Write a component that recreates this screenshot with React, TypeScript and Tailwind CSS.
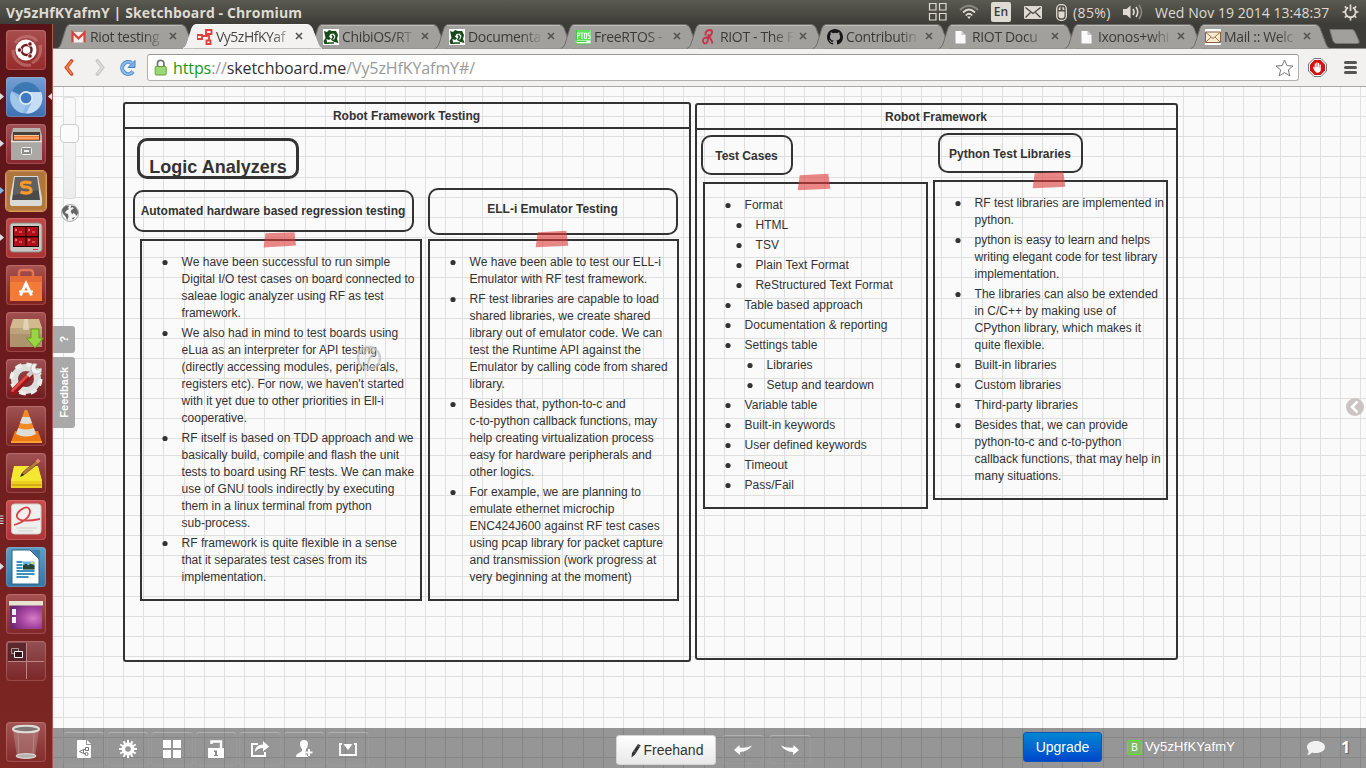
import React from "react";

const GRID = [0, 20, 40, 60, 80, 100, 121, 141, 161, 181, 201, 221, 242, 262, 282, 302, 322, 342, 362, 382];

function Grid() {
  return (
    <svg className="absolute inset-0 h-full w-full" shapeRendering="crispEdges">
      <defs>
        <pattern id="grid" x="10" y="-31" width="399" height="399" patternUnits="userSpaceOnUse">
          {GRID.map((v) => (
            <g key={v} fill="#dfdfdf">
              <rect x={v} y="0" width="1" height="399" />
              <rect x="0" y={v} width="399" height="1" />
            </g>
          ))}
        </pattern>
      </defs>
      <rect width="100%" height="100%" fill="url(#grid)" />
    </svg>
  );
}

/* ---------- system bar ---------- */

function SystemBar() {
  return (
    <header className="flex h-6 shrink-0 items-center justify-between bg-linear-to-b from-[#5b5a50] to-[#3e3d38] pr-[7px] pl-[6px] font-['Open_Sans',sans-serif] text-[14px] text-[#dfdbd2]">
      <div className="text-[14px] font-bold tracking-[0.120px] whitespace-nowrap">Vy5zHfKYafmY | Sketchboard - Chromium</div>
      <div className="flex h-full items-center">
        <svg width="20" height="20" viewBox="0 0 20 20" fill="none" stroke="#dfdbd2" strokeWidth="1.2">
          <path d="M1.500 1.500h6.500v6.500h-6.500zM11.500 1.500h6.500v6.500h-6.500zM1.500 11.500h6.500v6.500h-6.500zM11.500 11.500h6.500v6.500h-6.500z" />
        </svg>
        <svg className="ml-[11px]" width="20" height="16" viewBox="0 0 20 16" fill="none" stroke="#dfdbd2" strokeWidth="1.8">
          <path d="M1 6Q10-2.500 19 6" stroke="#8b8880" />
          <path d="M4 8.500Q10 2.500 16 8.500M6.800 11.500Q10 8 13.200 11.500" />
          <path d="M10 15l-2-2.500h4z" fill="#dfdbd2" stroke="none" />
        </svg>
        <div className="ml-[12px] flex h-5 w-5 items-center justify-center rounded-[2px] bg-[#dfdbd2] text-[12px] font-semibold text-[#3c3b37]">En</div>
        <svg className="ml-[13px]" width="18" height="13" viewBox="0 0 18 13">
          <rect width="18" height="13" rx="1" fill="#dfdbd2" />
          <path d="M1.500 1.500l7.500 6 7.500-6M1.500 11.500l5-5M16.500 11.500l-5-5" fill="none" stroke="#45443e" strokeWidth="1.200" />
        </svg>
        <svg className="ml-[14px]" width="11" height="17" viewBox="0 0 11 17">
          <rect x=".7" y=".7" width="9.600" height="15.600" rx="4" fill="none" stroke="#dfdbd2" strokeWidth="1.300" />
          <path d="M2.500 7.500h6v5q-.5 2-3 2t-3-2zM2.500 6q0-3 2-3.500V6zM8.500 6q0-3-2-3.500V6z" fill="#dfdbd2" />
        </svg>
        <span className="ml-[6px] w-[38px] text-[14px] tracking-[0.400px]">(85%)</span>
        <svg className="ml-3" width="20" height="16" viewBox="0 0 20 16" fill="none" stroke="#dfdbd2" strokeWidth="1.600">
          <path d="M0 5h3.500l4-3.500v13L3.500 11H0z" fill="#dfdbd2" stroke="none" />
          <path d="M10 5q2 3 0 6M13 3q3.500 5 0 10" />
          <path d="M16 1q5 7 0 14" stroke="#8b8880" />
        </svg>
        <span className="ml-3 w-[175px] text-[14px] tracking-[0.040px] whitespace-nowrap">Wed Nov 19 2014 13:48:37</span>
        <svg className="ml-3" width="17" height="18" viewBox="0 0 18 18" fill="none" stroke="#dfdbd2" strokeWidth="2">
          <path d="M6.500 4.200a5.500 5.500 0 1 0 5 0" />
          <path d="M9 1v7" strokeWidth="1.800" />
          <path d="M.5 9H4M14 9h3.500M3 3l2.300 2.300M15 3l-2.300 2.300M3 15l2.300-2.300M15 15l-2.300-2.300M9 14.500V18" strokeWidth="1.800" />
        </svg>
      </div>
    </header>
  );
}

/* ---------- tab strip ---------- */

const chibi = (
  <svg width="16" height="16" viewBox="0 0 16 16">
    <rect width="16" height="16" fill="#fff" />
    <path d="M1 2l3 1 2-2 3 1 4 0 2 4-1 4 1.500 4-4-1-3-1.500 3-1.500 1-3-2-2.500-3 .5-1.500 2.500 2 2-2 1.500-2.500-1 .5 3 2 2H1.500l-1-3 2-3z" fill="#174b18" />
    <path d="M9 6l1.500 2-2 3M4 6l2 1M5 14h6" fill="none" stroke="#174b18" strokeWidth="1.500" />
  </svg>
);
const page = (
  <svg width="16" height="16" viewBox="0 0 16 16">
    <path d="M2.500 2H8.500l4 4v8.500h-10z" fill="#fafafa" />
    <path d="M8.500 2v4h4z" fill="#c8c8c8" />
  </svg>
);

const TABS: { title: string; icon: React.ReactNode; active?: boolean }[] = [
  {
    title: "Riot testing",
    icon: (
      <svg width="16" height="16" viewBox="0 0 16 16">
        <path d="M1 3h13v10.500H1z" fill="#f1eeee" />
        <path d="M1.500 13.500V3.500l6 6 6-6v10" fill="none" stroke="#d6423b" strokeWidth="2.200" />
      </svg>
    ),
  },
  {
    title: "Vy5zHfKYaf",
    active: true,
    icon: (
      <svg width="18" height="16" viewBox="0 0 18 16" fill="none" stroke="#de3f3c" strokeWidth="1.800">
        <path d="M0 6h5v4H0zM9 1h5.500v4H9zM9.500 11.500h4v3.500h-4zM5 7h5V5M12 5v6" />
      </svg>
    ),
  },
  { title: "ChibiOS/RT", icon: chibi },
  { title: "Documenta", icon: chibi },
  {
    title: "FreeRTOS -",
    icon: (
      <svg width="16" height="16" viewBox="0 0 16 16">
        <path fill="#fff" d="M.5 1h15v14H.5z" />
        <path d="M.5 1h15v10.500H.5z" fill="#5be35e" />
        <path d="M2.500 4v6M2.500 4h2v2.500H3M5.500 4h3M7 4v6M9.500 4h2v5.500h-2zM15 4h-2v2.500h2v3h-2" fill="none" stroke="#eaffea" />
        <path d="M1.500 12.500h10M.5 14.800h15" stroke="#42cf45" />
        <path d="M1 1v14" stroke="#2c9c30" strokeWidth=".8" />
      </svg>
    ),
  },
  {
    title: "RIOT - The F",
    icon: (
      <svg width="16" height="16" viewBox="0 0 16 16" fill="none" stroke="#cb2f49" strokeWidth="1.800">
        <path d="M4.500 6.500q-.5-5 4-5.500 4 0 2 4-1 2-3.500 3 3 0 4.500 6.500M6.500 8.500q-5 0-4.500 3.500t3.500 2q2-2 2-9" />
      </svg>
    ),
  },
  {
    title: "Contributin",
    icon: (
      <svg width="16" height="16" viewBox="0 0 16 16">
        <path
          fill="#161616"
          d="M8 0C3.580 0 0 3.580 0 8c0 3.540 2.290 6.530 5.470 7.590.4.070.55-.17.55-.38v-1.490c-2.010.37-2.530-.49-2.690-.94-.09-.23-.48-.94-.82-1.130-.28-.15-.68-.52-.01-.53.63-.01 1.080.58 1.230.82.72 1.210 1.870.87 2.330.66.07-.52.28-.87.51-1.070-1.780-.2-3.640-.89-3.640-3.950 0-.87.31-1.590.82-2.150-.08-.2-.36-1.020.08-2.120 0 0 .67-.21 2.200.82a7.600 7.600 0 0 1 4 0c1.530-1.040 2.200-.82 2.200-.82.44 1.100.16 1.920.08 2.120.51.56.82 1.270.82 2.150 0 3.070-1.870 3.750-3.650 3.950.29.25.54.73.54 1.480v2.200c0 .21.15.46.55.38A8 8 0 0 0 16 8c0-4.420-3.580-8-8-8z"
        />
      </svg>
    ),
  },
  { title: "RIOT Docu", icon: page },
  { title: "Ixonos+whi", icon: page },
  {
    title: "Mail :: Welc",
    icon: (
      <svg width="16" height="16" viewBox="0 0 16 16">
        <path fill="#fff" d="M0 0h16v16H0z" />
        <path d="M.5 3h15v10.500H.5z" fill="#f7ead2" stroke="#876040" />
        <path d="M1 3.500l7 6 7-6M1 13l5-5M15 13l-5-5" fill="none" stroke="#a57249" />
      </svg>
    ),
  },
];

function Tab({ title, icon, active }: { title: string; icon: React.ReactNode; active?: boolean }) {
  return (
    <div className={active ? "relative z-10 flex h-[25px] w-[126px] items-center" : "relative flex h-[25px] w-[126px] items-center"}>
      <svg className="absolute top-0 left-0" width="140" height="25" viewBox="0 0 140 25">
        <path
          d="M0 24.500Q2.500 24 4 20L9 4Q10.300 .5 13 .5H124Q127.500 .5 129 4L135 20Q136.500 24 139 24.500"
          fill={active ? "#f3f2f1" : "#a2a09d"}
          stroke={active ? "#f8f8f8" : "#6f6e6a"}
        />
        {!active && <path d="M12 1.500H125" stroke="#bdbbb8" />}
      </svg>
      <div className="relative ml-[14px] flex h-4 w-[19px] shrink-0 items-center">{icon}</div>
      <span
        className={
          active
            ? "relative w-[75px] shrink-0 bg-linear-to-r from-[#45433f] from-75% to-[#d0cfcd] bg-clip-text font-['Open_Sans',sans-serif] text-[14px] leading-[22px] tracking-[-0.500px] whitespace-nowrap text-transparent"
            : "relative w-[76px] shrink-0 bg-linear-to-r from-[#3b3833] from-70% to-[#a2a09d] to-98% bg-clip-text font-['Open_Sans',sans-serif] text-[14px] leading-[22px] tracking-[-0.350px] whitespace-nowrap text-transparent"
        }
      >
        {title}
      </span>
      <svg className="absolute top-[8px] left-[112px]" width="8" height="8" viewBox="0 0 8 8">
        <path d="M1 1l6 6M7 1l-6 6" stroke="#55534f" strokeWidth="1.600" />
      </svg>
    </div>
  );
}

function TabStrip() {
  return (
    <div className="flex h-[25px] items-start border-b border-[#8b8a87] bg-[#3d3c38] pl-[4px]">
      {TABS.map((t, i) => (
        <Tab key={i} {...t} />
      ))}
      <svg className="mt-[5px] ml-[11px]" width="33" height="16" viewBox="0 0 33 16">
        <path d="M2 1.500Q1 .5 3 .5H24Q26 .5 27 3L31 12Q32 14.500 29 14.500H9Q6 14.500 5 12z" fill="#a2a09d" stroke="#77756f" />
      </svg>
    </div>
  );
}

function AddressBar() {
  return (
    <div className="flex h-[38px] items-center border-b border-[#a9a8a6] bg-[#f2f1f0] pr-[9px] pl-[11px]">
      <svg width="10" height="17" viewBox="0 0 10 17">
        <path d="M7.500 2L2.500 8.500 7.500 15" fill="none" stroke="#c9481c" strokeWidth="3.600" strokeLinecap="round" />
        <path d="M7.300 2.500L2.700 8.500l4.600 6" fill="none" stroke="#f08048" strokeWidth="1.800" strokeLinecap="round" />
      </svg>
      <svg className="ml-[21px]" width="10" height="17" viewBox="0 0 10 17">
        <path d="M2.500 2L7.500 8.500 2.500 15" fill="none" stroke="#c6c4c1" strokeWidth="3.600" strokeLinecap="round" />
        <path d="M2.700 2.500l4.600 6-4.600 6" fill="none" stroke="#dddbd9" strokeWidth="1.800" strokeLinecap="round" />
      </svg>
      <svg className="ml-[14px]" width="18" height="18" viewBox="0 0 18 18" fill="none">
        <path d="M12.500 4A6 6 0 1 0 14 12.500" stroke="#4384c4" strokeWidth="4" />
        <path d="M12.500 4A6 6 0 1 0 14 12.500" stroke="#8ab8e6" strokeWidth="2.400" />
        <path d="M16 1.500v7H9z" fill="#7db0e2" stroke="#4384c4" />
      </svg>
      <div className="ml-[10px] flex h-[27px] w-[1152px] items-center rounded-[3px] border border-[#b3b1ae] border-t-[#989693] bg-white pr-[4px] pl-[6px]">
        <svg width="14" height="17" viewBox="0 0 14 17">
          <path d="M3.500 8V4.500a3.200 3.200 0 0 1 6.400 0V8" fill="none" stroke="#777" strokeWidth="1.800" />
          <rect x="1.200" y="7.500" width="11" height="8.500" rx="1" fill="#9ad973" stroke="#5fa03a" />
        </svg>
        <div className="ml-[5px] flex-1 font-['Open_Sans',sans-serif] text-[16px] tracking-[-0.100px] whitespace-nowrap text-[#999]">
          <span className="text-[#159a15]">https</span>://<span className="text-[#2f2f2f]">sketchboard.me</span>/Vy5zHfKYafmY#/
        </div>
        <svg width="19" height="18" viewBox="0 0 19 18">
          <path d="M9.500 1l2.400 5.600 6.100.4-4.700 3.900 1.600 6-5.400-3.300-5.400 3.300 1.600-6L1 7l6.100-.4z" fill="#fff" stroke="#777" strokeLinejoin="round" />
        </svg>
      </div>
      <svg className="ml-[9px]" width="19" height="19" viewBox="0 0 19 19">
        <path d="M6 .5h7l5.500 5.500v7L13 18.500H6L.5 13V6z" fill="#fff" stroke="#777" />
        <path d="M6.500 2h6L17 6.500v6L12.500 17h-6L2 12.500v-6z" fill="#d7110f" />
        <path d="M5 9q1.200-.8 1.700 1V5.500h1.200V9h.4V4.500h1.300V9H10V5h1.200v4.500h.4V6.500h1.200v5.500q-.5 2.800-3.300 2.800T5 9" fill="#fff" />
      </svg>
      <div className="ml-[17px] flex w-[13px] flex-col gap-[2px]">
        <div className="h-[3px] rounded-sm bg-[#555]" />
        <div className="h-[3px] rounded-sm bg-[#555]" />
        <div className="h-[3px] rounded-sm bg-[#555]" />
      </div>
    </div>
  );
}

/* ---------- launcher ---------- */

type LaunchItem = { bg: string; art: React.ReactNode; mark?: string };

const ITEMS: LaunchItem[] = [
  {
    bg: "bg-linear-to-b from-[#a84e4e] to-[#962a2a]",
    art: (
      <>
        <path d="M9 13a14 14 0 0 1 22-2M34 15a15 15 0 0 1-8 18M25 35A15 15 0 0 1 7 20" fill="none" stroke="#c98080" strokeWidth="3" opacity=".6" />
        <circle cx="20" cy="20" r="10.500" fill="#fff" />
        <circle cx="20.500" cy="20" r="5" fill="none" stroke="#76191c" strokeWidth="2.400" />
        <g fill="#76191c" stroke="#fff" strokeWidth=".8">
          <circle cx="13.500" cy="20" r="2.200" />
          <circle cx="24" cy="14" r="2.200" />
          <circle cx="24" cy="26" r="2.200" />
        </g>
      </>
    ),
  },
  {
    mark: "#ddd",
    bg: "bg-linear-to-b from-[#73a0d4] to-[#3d70b0]",
    art: (
      <>
        <circle cx="20" cy="21" r="15.500" fill="#8db8e4" />
        <path d="M20 21L6 14A15.500 15.500 0 0 1 34.500 15z" fill="#3d78b4" />
        <path d="M20 15h15.200a15.500 15.500 0 0 1-15 21.500l6-12z" fill="#c4def4" />
        <path d="M5.500 14.500l9 9.500 6 3-4 9A15.500 15.500 0 0 1 5.500 14.500" fill="#a0c6ec" />
        <circle cx="20" cy="21" r="7" fill="#dcecf8" />
        <circle cx="20" cy="21" r="5.300" fill="#4179c7" />
      </>
    ),
  },
  {
    mark: "#ddd",
    bg: "bg-linear-to-b from-[#a05055] to-[#87272f]",
    art: (
      <>
        <path d="M7 4h27l2 8v6H5v-6z" fill="#b5b3b0" />
        <path d="M7 8h27v10H7z" fill="#493e39" />
        <path d="M8 11h25v5H8z" fill="#ed7731" />
        <path d="M8 11.500h25M8 14h25" stroke="#f8c79a" />
        <path d="M5 17h31v19H5z" fill="#aaa9a5" />
        <path d="M5 17.500h31" stroke="#e6e6e2" strokeWidth="1.500" />
        <rect x="15.500" y="23.500" width="10" height="7" rx="1" fill="#8b8b88" stroke="#eee" />
        <path d="M18 26h5v2h-5z" fill="#eee" />
      </>
    ),
  },
  {
    mark: "#7db8df",
    bg: "bg-linear-to-b from-[#ad743c] to-[#b47839] ring-1 ring-[#dc9c4b]",
    art: (
      <>
        <path d="M8 5h24l4 22v6q0 2-2 2H6q-2 0-2-2v-6z" fill="#d9d9d8" />
        <path d="M9 6h22l3 23H6z" fill="#4a4a4b" />
        <path d="M9 6h22l2 13-26 5z" fill="#6f6f6f" opacity=".6" />
        <path d="M25.500 12q-8-2-10 .5-1 3.500 4.500 3.500t5 4.500q-3 3-10.500.5" fill="none" stroke="#f5982a" strokeWidth="3.200" />
      </>
    ),
  },
  {
    mark: "#ddd",
    bg: "bg-linear-to-b from-[#bf4848] to-[#aa3334]",
    art: (
      <>
        <rect x="4" y="5" width="32" height="29" rx="3" fill="#c9c6c1" stroke="#8e8882" />
        <path d="M7 8h26v21H7z" fill="#230204" />
        <path d="M8 9h11v9H8zM20.500 9H32v9H20.500zM8 19.500h11V28H8zM20.500 19.500H32V28H20.500z" fill="#b20f18" />
        <path d="M9 11l2 1-2 1M13 14h3M22 11l2 1-2 1M26 14h3M9 21l2 1-2 1M13 24h3M22 21l2 1-2 1M26 24h3" fill="none" stroke="#f5a8a8" strokeWidth=".8" />
        <path d="M27 31.500h5" stroke="#d34" strokeWidth="1" />
      </>
    ),
  },
  {
    bg: "bg-linear-to-b from-[#a75350] to-[#7f2020]",
    art: (
      <>
        <path d="M13 12V8q0-3 3-3h8q3 0 3 3v4" fill="none" stroke="#df7455" strokeWidth="2.500" />
        <path d="M4 11h32v25H4z" fill="#f37b3a" />
        <path d="M4 11h32v6H4z" fill="#e46a36" />
        <path d="M14.500 30.500l5.500-12 5.500 12" fill="none" stroke="#fff" strokeWidth="3" />
        <path d="M13 26.500h14" stroke="#fff" strokeWidth="2" />
      </>
    ),
  },
  {
    bg: "bg-linear-to-b from-[#a15050] to-[#7d2022]",
    art: (
      <>
        <path d="M7 7h26l3 9H4z" fill="#d2b98e" />
        <path d="M4 16h32v19H4z" fill="#ad946f" />
        <path d="M4 16h32v6H4z" fill="#bca37b" />
        <path d="M18 7h4l1 11h-6z" fill="#e9dec7" opacity=".7" />
        <path d="M25 17h8v9h4.500L29 36l-8.500-10H25z" fill="#9bd444" stroke="#639b1b" />
      </>
    ),
  },
  {
    bg: "bg-linear-to-b from-[#a05054] to-[#6f1a1e]",
    art: (
      <>
        <circle cx="20" cy="20" r="11.500" fill="none" stroke="#dededc" strokeWidth="7" />
        <circle cx="20" cy="20" r="14.500" fill="none" stroke="#ededeb" strokeWidth="4" strokeDasharray="6.500 4.890" />
        <path d="M7 33L24 16" stroke="#9a1519" strokeWidth="6.500" strokeLinecap="round" />
        <path d="M6.500 31.500L23 15" stroke="#df4a49" strokeWidth="3" strokeLinecap="round" />
        <path d="M22 17L28 11" stroke="#ccc" strokeWidth="4.500" />
        <path d="M31 5q-6-2-6 5 1 6 7 5 5-2 3-6l-4 2-2-2z" fill="#f1f1ef" stroke="#aaa" strokeWidth=".7" />
      </>
    ),
  },
  {
    bg: "bg-linear-to-b from-[#a15353] to-[#762022]",
    art: (
      <>
        <path d="M9 25h23l4 11H5z" fill="#ee7914" />
        <path d="M18.500 4.500q1.500-1.500 3 0L30 28q-10 6-20 0z" fill="#f28b24" />
        <path d="M16.200 11h7.600l2.200 6q-6 2-12 0zM12.200 22q8 3 15.600 0l2.200 6q-10 5-20 0z" fill="#dddeda" />
        <path d="M5 35h31v2H5z" fill="#f9a132" />
      </>
    ),
  },
  {
    bg: "bg-linear-to-b from-[#a05354] to-[#7a2223]",
    art: (
      <>
        <path d="M8 14h24l4 14v7H5v-7z" fill="#edcf1d" />
        <path d="M8 13h24l4 15H5z" fill="#f4e731" />
        <path d="M6 32h29" stroke="#b58d12" />
        <path d="M15 23l2-4L31 7l2.500 2.500L19 21z" fill="#b77a43" stroke="#634122" strokeWidth=".7" />
        <path d="M29.500 8L32 5.500l2.500 2.500-2.500 2.500z" fill="#f08077" />
        <path d="M14 24l2-4 2 2z" fill="#2b2520" />
      </>
    ),
  },
  {
    mark: "bars",
    bg: "bg-linear-to-b from-[#c94e4e] to-[#ae3436]",
    art: (
      <>
        <rect x="5.500" y="4" width="29.500" height="30" rx="3" fill="#efefed" stroke="#ccc" />
        <path d="M8 25q16-5 16-14-1-5-6-3-8 4-7 9 2 6 23 2" fill="none" stroke="#db4144" strokeWidth="1.800" />
        <path d="M10 28h21M12 31h15" stroke="#cfcfcd" strokeWidth="1.200" />
      </>
    ),
  },
  {
    mark: "#ddd",
    bg: "bg-linear-to-b from-[#5d9fc4] to-[#2f77a5]",
    art: (
      <>
        <path d="M6 3h18l9 9v25H6z" fill="#fff" stroke="#28658b" />
        <path d="M25 3h9v9z" fill="#3c82aa" />
        <path d="M10.500 15h6M10.500 18h6M10.500 21h6M10.500 24h18M10.500 27h18M10.500 30h12" stroke="#3d92bf" strokeWidth="1.800" />
        <path d="M17 14.500h11.500v8H17z" fill="#66b8dd" />
        <path d="M17 22.500v-4l3-2 2 2 3-2 3.500 2v4z" fill="#274536" />
        <circle cx="26" cy="16" r="1.300" fill="#f0d85c" />
      </>
    ),
  },
  {
    bg: "bg-linear-to-b from-[#a75353] to-[#802628]",
    art: (
      <>
        <defs>
          <radialGradient id="desk" cx=".72" cy=".55" r=".75">
            <stop offset="0" stopColor="#d57cc6" />
            <stop offset=".5" stopColor="#a645a0" />
            <stop offset="1" stopColor="#6d2674" />
          </radialGradient>
        </defs>
        <path d="M4 11h32v24H4z" fill="url(#desk)" />
        <path d="M3 7h34v4.500H3z" fill="#e7e3ce" />
        <path d="M6 15h4v6H6zM6 23h4v6H6z" fill="#f3eff5" />
      </>
    ),
  },
  {
    bg: "bg-linear-to-b from-[#935054] to-[#7b2627]",
    art: (
      <>
        <path d="M2 2h18v18H2z" fill="#45191f" opacity=".7" />
        <path d="M2 20.500h36M20.500 2v36" stroke="#be8586" />
        <path d="M5.500 7.500h7v5h-7z" fill="none" stroke="#a79798" />
        <path d="M8.500 10.500h8v6h-8z" fill="#35161a" stroke="#fff" />
      </>
    ),
  },
];

function LauncherTile({ bg, art, mark }: LaunchItem) {
  return (
    <div className="relative flex h-10 w-[53px] shrink-0 pl-[6px]">
      {mark && mark !== "bars" && (
        <svg className="absolute top-[15px] left-0" width="4" height="9" viewBox="0 0 4 9">
          <path d="M0 1l4 3.500-4 3.500z" fill={mark} />
        </svg>
      )}
      {mark === "bars" && (
        <svg className="absolute top-[15px] left-0" width="4" height="10" viewBox="0 0 4 10">
          <path d="M0 1h3.500M0 3.500h3.500M0 6h3.500M0 8.500h3.500" stroke="#ddd" />
        </svg>
      )}
      <div className={"h-10 w-10 overflow-hidden rounded-[4px] shadow-[inset_0_0_1px_1px_rgba(255,190,190,0.25)] " + bg}>
        <svg width="40" height="40" viewBox="0 0 40 40">
          {art}
        </svg>
      </div>
    </div>
  );
}

function Launcher() {
  return (
    <aside className="relative flex w-[53px] shrink-0 flex-col border-r border-[#b05550] bg-linear-to-b from-[#591318] via-[#6e1c1e] to-[#7e2723] pt-[6px]">
      <div className="flex flex-col gap-[7px]">
        {ITEMS.map((it, i) => (
          <LauncherTile key={i} {...it} />
        ))}
      </div>
      <svg className="absolute top-[68px] left-[48px]" width="4" height="9" viewBox="0 0 4 9">
        <path d="M4 1L0 4.500 4 8z" fill="#ddd" />
      </svg>
      <div className="mt-[41px]">
        <LauncherTile
          bg="bg-linear-to-b from-[#a35454] to-[#832b2b]"
          art={
            <>
              <path d="M7 8h26l-4 27q-9 4-18 0z" fill="#c9b1ae" opacity=".35" />
              <path d="M12 10l1 24M28 10l-1 24" stroke="#c5aaa8" opacity=".5" />
              <ellipse cx="20" cy="7" rx="13" ry="3.300" fill="#807672" stroke="#deddda" strokeWidth="2" />
              <ellipse cx="20" cy="34" rx="10" ry="2.300" fill="#b5b2ae" stroke="#e5e3df" />
            </>
          }
        />
      </div>
    </aside>
  );
}

/* ---------- board ---------- */

type Entry = { lines: string[]; level?: number };
const e = (level: number, ...lines: string[]): Entry => ({ lines, level });

const HARDWARE = [
  e(0, "We have been successful to run simple", "Digital I/O test cases on board connected to", "saleae logic analyzer using RF as test", "framework."),
  e(0, "We also had in mind to test boards using", "eLua as an interpreter for API testing", "(directly accessing modules, peripherals,", "registers etc). For now, we haven't started", "with it yet due to other priorities in Ell-i", "cooperative."),
  e(0, "RF itself is based on TDD approach and we", "basically build, compile and flash the unit", "tests to board using RF tests. We can make", "use of GNU tools indirectly by executing", "them in a linux terminal from python", "sub-process."),
  e(0, "RF framework is quite flexible in a sense", "that it separates test cases from its", "implementation."),
];
const EMULATOR = [
  e(0, "We have been able to test our ELL-i", "Emulator with RF test framework."),
  e(0, "RF test libraries are capable to load", "shared libraries, we create shared", "library out of emulator code. We can", "test the Runtime API against the", "Emulator by calling code from shared", "library."),
  e(0, "Besides that, python-to-c and", "c-to-python callback functions, may", "help creating virtualization process", "easy for hardware peripherals and", "other logics."),
  e(0, "For example, we are planning to", "emulate ethernet microchip", "ENC424J600 against RF test cases", "using pcap library for packet capture", "and transmission (work progress at", "very beginning at the moment)"),
];
const CASES = [
  e(0, "Format"), e(1, "HTML"), e(1, "TSV"), e(1, "Plain Text Format"), e(1, "ReStructured Text Format"),
  e(0, "Table based approach"), e(0, "Documentation & reporting"), e(0, "Settings table"), e(2, "Libraries"), e(2, "Setup and teardown"),
  e(0, "Variable table"), e(0, "Built-in keywords"), e(0, "User defined keywords"), e(0, "Timeout"), e(0, "Pass/Fail"),
];
const LIBS = [
  e(0, "RF test libraries are implemented in", "python."),
  e(0, "python is easy to learn and helps", "writing elegant code for test library", "implementation."),
  e(0, "The libraries can also be extended", "in C/C++ by making use of", "CPython library, which makes it", "quite flexible."),
  e(0, "Built-in libraries"), e(0, "Custom libraries"), e(0, "Third-party libraries"),
  e(0, "Besides that, we can provide", "python-to-c and c-to-python", "callback functions, that may help in", "many situations."),
];
const INDENT = ["pl-[19.600px]", "pl-[30.600px]", "pl-[41.600px]"];

function Note({ place, entries, tape, flat }: { place: string; entries: Entry[]; tape: string; flat?: boolean }) {
  return (
    <section className={"absolute border-2 border-[#333] " + place}>
      <svg className={"absolute " + tape} width="34" height="18" viewBox="0 0 34 18">
        <path d={flat ? "M2.500 3.300L31.500 2.300 33 15.500.700 17.500z" : "M2.700 2.300L31.300 .7 33.300 15.700.700 17.300z"} fill="#dd3a3a" fillOpacity=".6" />
      </svg>
      <ul className="flex flex-col gap-[3px] pt-[13px] text-[12px] leading-[17px] whitespace-pre">
        {entries.map((it, i) => (
          <li key={i} className={"flex " + INDENT[it.level ?? 0]}>
            <svg className="mt-[5px] mr-[14px] shrink-0" width="6" height="7" viewBox="0 0 6 7">
              <circle cx="3" cy="3.500" r="2.600" fill="#333" />
            </svg>
            <span>{it.lines.join("\n")}</span>
          </li>
        ))}
      </ul>
    </section>
  );
}

function Label({ place, children }: { place: string; children: React.ReactNode }) {
  return (
    <div className={"absolute flex items-center justify-center rounded-[10px] border-2 border-[#333] text-[12px] font-bold whitespace-nowrap " + place}>{children}</div>
  );
}

function Frame({ place, title }: { place: string; title: string }) {
  return (
    <div className={"absolute rounded-[3px] border-2 border-[#333] " + place}>
      <div className="flex h-[25px] items-center justify-center border-b-2 border-[#333] pr-px text-[12px] font-bold">{title}</div>
    </div>
  );
}

function ToolButton({ children }: { children: React.ReactNode }) {
  return <div className="flex h-[34px] w-[42px] items-center justify-center rounded-[4px] border border-white/5 border-t-white/25">{children}</div>;
}

function BottomBar() {
  return (
    <footer className="absolute inset-x-0 bottom-0 flex h-10 items-center bg-black/40 pl-[10px]">
      <div className="mt-[2px] flex w-[553px] gap-[2px]">
        <ToolButton>
          <svg width="14" height="18" viewBox="0 0 14 18">
            <path d="M0 1q0-1 1-1h8v5h5v12q0 1-1 1H1q-1 0-1-1zM10 0l4 4h-4z" fill="#fff" />
            <path d="M2.500 11.500l4-2v4zM8.500 7.500h3v3h-3zM6.500 10l2-1M6.500 13l2 1" fill="none" stroke="#777" />
            <circle cx="9.500" cy="14" r="1.500" fill="none" stroke="#777" />
          </svg>
        </ToolButton>
        <ToolButton>
          <svg width="18" height="18" viewBox="0 0 18 18">
            <circle cx="9" cy="9" r="4.600" fill="none" stroke="#fff" strokeWidth="3.600" />
            <path d="M9 0v4M9 14v4M0 9h4M14 9h4M4.500 1.200l2 3.500M11.500 13.300l2 3.500M1.200 4.500l3.500 2M13.300 11.500l3.500 2M1.200 13.500l3.500-2M13.300 6.500l3.500-2M4.500 16.800l2-3.500M11.500 4.700l2-3.500" stroke="#fff" strokeWidth="2" />
          </svg>
        </ToolButton>
        <ToolButton>
          <svg width="18" height="18" viewBox="0 0 18 18">
            <path d="M0 0h8v8H0zM10 0h8v8h-8zM0 10h8v8H0zM10 10h8v8h-8z" fill="#fff" />
          </svg>
        </ToolButton>
        <ToolButton>
          <svg width="16" height="18" viewBox="0 0 16 18">
            <path d="M3.500 4V1.500H13V8" fill="none" stroke="#fff" strokeWidth="2.400" />
            <path d="M0 8h16v10H0z" fill="#fff" />
            <path d="M6 10.500h3V15h1v1H6v-1h1v-3H6z" fill="#888" />
          </svg>
        </ToolButton>
        <ToolButton>
          <svg width="18" height="16" viewBox="0 0 18 16">
            <path d="M7 3H1v12h13v-4" fill="none" stroke="#fff" strokeWidth="2" />
            <path d="M4 11q0-7.500 8-7.500V0l6 5.500-6 5V7Q7 7 4 11" fill="#fff" />
          </svg>
        </ToolButton>
        <ToolButton>
          <svg width="17" height="18" viewBox="0 0 17 18">
            <path d="M8 0q4 0 4 4 0 3-2 5v2l2 1v5H0q0-3 3-4l3-2V9Q4 7 4 4q0-4 4-4" fill="#fff" />
            <path d="M13 9v7M9.500 12.500h7" stroke="#929292" strokeWidth="4" />
            <path d="M13 9v7M9.500 12.500h7" stroke="#fff" strokeWidth="2" />
          </svg>
        </ToolButton>
        <ToolButton>
          <svg width="18" height="13" viewBox="0 0 18 13">
            <path d="M3 1H1v11h16V1h-2" fill="none" stroke="#fff" strokeWidth="1.800" />
            <path d="M4.500 1h9L9 7z" fill="#fff" />
          </svg>
        </ToolButton>
      </div>
      <div className="mt-[4px] flex h-[30px] w-[100px] items-center rounded-[3px] border border-[#d5d5d5] bg-linear-to-b from-white to-[#e8e8e8] pl-[14px] text-[14px] text-[#333]">
        <svg width="11" height="15" viewBox="0 0 11 15">
          <path d="M1 10L7 1 9.800 2.600 4 11.500 .5 14.500z" fill="#333" />
          <path d="M3 8l2.500 1.500M6.500 2.500L9 4" stroke="#999" strokeWidth=".6" />
        </svg>
        <span className="ml-[1.500px]">Freehand</span>
      </div>
      <div className="mt-[3px] ml-[6px] flex gap-[5px]">
        <div className="flex h-[29px] w-[42px] items-center justify-center rounded-[4px] border border-white/5 border-t-white/25">
          <svg width="18" height="11" viewBox="0 0 18 11">
            <path d="M0 6L5.500 1v2.500Q12 4.500 18 1.500 14 8 6 8v3z" fill="#fff" />
          </svg>
        </div>
        <div className="flex h-[29px] w-[42px] items-center justify-center rounded-[4px] border border-white/5 border-t-white/25">
          <svg width="18" height="11" viewBox="0 0 18 11">
            <path d="M18 6L12.500 1v2.500Q6 4.500 0 1.500 4 8 12 8v3z" fill="#fff" />
          </svg>
        </div>
      </div>
      <div className="-mt-[2px] ml-[212px] flex h-[30px] w-[79px] items-center justify-center rounded-[3px] border border-[#0c54b8] bg-linear-to-b from-[#0586d1] to-[#0445cd] text-[14px] text-white">Upgrade</div>
      <div className="-mt-[1px] ml-[25px] flex items-center">
        <div className="flex h-[15px] w-[15px] items-center justify-center rounded-[3px] border border-[#5de426] bg-[#81b766] text-[10px] text-white">B</div>
        <span className="-mt-px ml-[3px] w-[92px] text-[13px] tracking-[0.160px] text-white">Vy5zHfKYafmY</span>
      </div>
      <svg className="ml-[69px]" width="19" height="15" viewBox="0 0 19 15">
        <path d="M10 0c5 0 9 2.500 9 6s-4 6-9 6q-2 0-4-.6Q4 14 1 14q2-1.500 1.500-4Q1 8.500 1 6c0-3.500 4-6 9-6" fill="#f1f1f1" />
      </svg>
      <span className="-mt-[2px] ml-[16px] font-['Open_Sans',sans-serif] text-[16px] font-bold text-white [text-shadow:1px_1px_1px_#555]">1</span>
    </footer>
  );
}

function Globe() {
  return (
    <svg className="absolute top-[117px] left-[8px]" width="18" height="18" viewBox="0 0 18 18">
      <circle cx="9" cy="9" r="8.500" fill="#f4f4f4" stroke="#888" strokeWidth=".7" />
      <path d="M2 4l3-2.500 3 .5-1 2 1 1-3 2-1 2 3 1 .5 3-1.500 3.500Q5 12 3 11 1 9 1 6zM10 1.500l4 1L16.500 6l.7 3-2 3-1-2-2-1-1 1.500-1.500-3 1-2 2-.5-1-2-2 1zM11 14l3-1-2 3z" fill="#666" />
    </svg>
  );
}

function Board() {
  return (
    <main className="relative flex-1 overflow-hidden bg-[#fafafa] font-['Liberation_Sans',Arial,sans-serif] text-[#333]">
      <Grid />
      <div className="absolute top-[10px] left-[10px] h-[102px] w-[13px] rounded-[3px] border border-[#ddd] bg-linear-to-b from-[#fafafa] to-[#ececec]" />
      <div className="absolute top-[37px] left-[7px] h-[19px] w-[19px] rounded-[4px] border border-[#ccc] bg-[#fbfbfb]" />
      <Globe />

      <Frame place="left-[70px] top-[15px] h-[560px] w-[568px]" title="Robot Framework Testing" />
      <Frame place="left-[642px] top-[16px] h-[557px] w-[483px]" title="Robot Framework" />

      <div className="absolute top-[51px] left-[84px] flex h-[41px] w-[162px] items-end justify-center rounded-[10px] border-[3px] border-[#333] text-[18px] leading-[20px] font-bold whitespace-nowrap">
        <span className="-mb-px">Logic Analyzers</span>
      </div>
      <Label place="left-[80px] top-[103px] h-[42px] w-[281px] pr-px">Automated hardware based regression testing</Label>
      <Label place="left-[375px] top-[101px] h-[47px] w-[250px] pb-[5px] pr-px">ELL-i Emulator Testing</Label>
      <Label place="left-[648px] top-[48px] h-[40px] w-[92px] pt-[2px] pr-px">Test Cases</Label>
      <Label place="left-[885px] top-[46px] h-[40px] w-[145px] pt-[2px] pr-px">Python Test Libraries</Label>

      <Note flat place="left-[87px] top-[152px] h-[362px] w-[282px]" entries={HARDWARE} tape="-top-[11px] left-[121px]" />
      <Note place="left-[375px] top-[152px] h-[362px] w-[251px]" entries={EMULATOR} tape="-top-[11px] left-[105px]" />
      <Note place="left-[650px] top-[95px] h-[327px] w-[225px]" entries={CASES} tape="-top-[11px] left-[92px]" />
      <Note place="left-[880px] top-[93px] h-[320px] w-[235px]" entries={LIBS} tape="-top-[11px] left-[97px]" />

      <svg className="absolute top-[257px] left-[302px]" width="28" height="28" viewBox="0 0 28 28" fill="none">
        <circle cx="14" cy="14" r="11" stroke="#c4c4c4" strokeWidth="2.300" fill="#ddd" fillOpacity=".2" opacity=".8" />
        <path d="M9 11q0-5 5-5t5 5q-5 1-6 9" stroke="#bbb" strokeWidth="2" opacity=".7" />
      </svg>

      <div className="absolute top-[239px] left-0 flex flex-col gap-1 text-[11px] font-bold text-white">
        <div className="flex h-[27px] w-[22px] items-center justify-center rounded-r-[3px] bg-[#a9a9a9]">
          <span className="-rotate-90">?</span>
        </div>
        <div className="flex h-[71px] w-[22px] items-center justify-center rounded-r-[3px] bg-[#a9a9a9]">
          <span className="-rotate-90">Feedback</span>
        </div>
      </div>

      <svg className="absolute top-[311px] right-[2px]" width="18" height="18" viewBox="0 0 18 18">
        <circle cx="9" cy="9" r="9" fill="#cbc4c1" />
        <path d="M11.500 3.500L6 9l5.500 5.500" fill="none" stroke="#fff" strokeWidth="2.500" />
      </svg>
      <BottomBar />
    </main>
  );
}

export default function App() {
  return (
    <div className="flex h-[768px] w-[1366px] flex-col overflow-hidden">
      <SystemBar />
      <div className="flex min-h-0 flex-1">
        <Launcher />
        <div className="flex min-w-0 flex-1 flex-col">
          <TabStrip />
          <AddressBar />
          <Board />
        </div>
      </div>
    </div>
  );
}
